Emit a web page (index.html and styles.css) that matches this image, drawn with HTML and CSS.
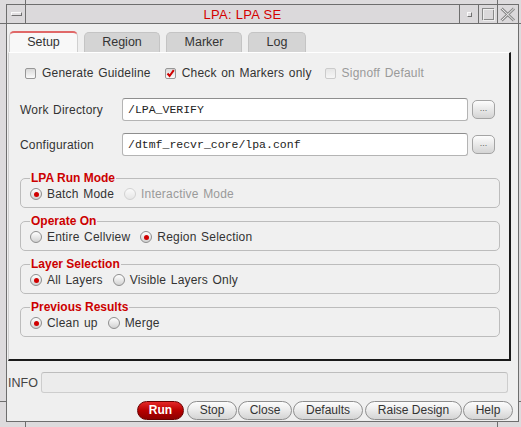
FILE: index.html
```html
<!DOCTYPE html>
<html>
<head>
<meta charset="utf-8">
<link rel="stylesheet" href="styles.css">
</head>
<body>
<div class="screen">
  <span class="deco dh1"></span>
  <span class="deco dh2"></span>
  <span class="deco dh3"></span>
  <span class="deco dh4"></span>
  <span class="deco dv1"></span>
  <span class="deco dv2"></span>
  <span class="deco dv3"></span>
  <span class="deco dv4"></span>
  <div class="window">
    <div class="titlebar">
      <div class="tb-cell"><span class="menu-ico"></span></div>
      <div class="tb-cell tb-title">LPA: LPA SE</div>
      <div class="tb-cell"><span class="min-ico"></span></div>
      <div class="tb-cell">
        <svg width="13" height="13" viewBox="0 0 13 13"><rect x="0.5" y="0.5" width="11" height="11" fill="none" stroke="#8a8a8a"/><rect x="1.5" y="1.5" width="11" height="11" fill="none" stroke="#f4f4f4" stroke-opacity="0.8"/></svg>
      </div>
      <div class="tb-cell last">
        <svg width="16" height="15" viewBox="0 0 16 15"><path d="M1.5 1.5 L14 13.5 M14 1.5 L1.5 13.5" stroke="#8a8a8a" stroke-width="3" fill="none"/><path d="M1.5 1.5 L14 13.5 M14 1.5 L1.5 13.5" stroke="#f2f2f2" stroke-width="1" fill="none"/></svg>
      </div>
    </div>
    <div class="dialog">
      <div class="tabs">
        <div class="tab active">Setup</div>
        <div class="tab">Region</div>
        <div class="tab">Marker</div>
        <div class="tab log">Log</div>
      </div>
      <div class="panel">
        <div class="check-row">
          <div class="check"><span class="cb"></span>Generate Guideline</div>
          <div class="check c2"><span class="cb"><svg width="9" height="9" viewBox="0 0 9 9"><path d="M1.5 4.5 L3.6 7 L7.8 1.2" stroke="#d00000" stroke-width="2" fill="none"/></svg></span>Check on Markers only</div>
          <div class="check c3 disabled"><span class="cb"></span>Signoff Default</div>
        </div>
        <div class="field first">
          <span class="flabel">Work Directory</span>
          <div class="input">/LPA_VERIFY</div>
          <div class="dots">...</div>
        </div>
        <div class="field">
          <span class="flabel">Configuration</span>
          <div class="input">/dtmf_recvr_core/lpa.conf</div>
          <div class="dots">...</div>
        </div>
        <fieldset class="group first">
          <legend>LPA Run Mode</legend>
          <div class="radio-row">
            <div class="ritem"><span class="rb on"></span>Batch Mode</div>
            <div class="ritem disabled"><span class="rb"></span>Interactive Mode</div>
          </div>
        </fieldset>
        <fieldset class="group">
          <legend>Operate On</legend>
          <div class="radio-row">
            <div class="ritem"><span class="rb"></span>Entire Cellview</div>
            <div class="ritem"><span class="rb on"></span>Region Selection</div>
          </div>
        </fieldset>
        <fieldset class="group">
          <legend>Layer Selection</legend>
          <div class="radio-row">
            <div class="ritem"><span class="rb on"></span>All Layers</div>
            <div class="ritem"><span class="rb"></span>Visible Layers Only</div>
          </div>
        </fieldset>
        <fieldset class="group">
          <legend>Previous Results</legend>
          <div class="radio-row">
            <div class="ritem"><span class="rb on"></span>Clean up</div>
            <div class="ritem"><span class="rb"></span>Merge</div>
          </div>
        </fieldset>
      </div>
      <div class="info-row">
        <span class="info-label">INFO</span>
        <div class="info-box"></div>
      </div>
      <div class="buttons">
        <button class="btn run">Run</button>
        <button class="btn stop">Stop</button>
        <button class="btn close">Close</button>
        <button class="btn defaults">Defaults</button>
        <button class="btn raise">Raise Design</button>
        <button class="btn help">Help</button>
      </div>
    </div>
  </div>
</div>
</body>
</html>
```

FILE: styles.css
```css
* { box-sizing: border-box; }
html, body { margin: 0; padding: 0; }
body {
  background: #dddbdd;
  font-family: "Liberation Sans", Arial, sans-serif;
  font-size: 12px;
  color: #333;
}
.screen {
  position: relative;
  width: 521px;
  height: 427px;
  padding: 4px 0 0 6px;
  overflow: hidden;
}
.deco { position: absolute; background: #6e6e6e; }
.dh1 { left: 0; top: 23px; width: 6px; height: 1px; }
.dh2 { left: 519px; top: 23px; width: 3px; height: 1px; }
.dh3 { left: 0; top: 401px; width: 6px; height: 1px; }
.dh4 { left: 519px; top: 401px; width: 3px; height: 1px; }
.dv1 { left: 25px; top: 0; width: 1px; height: 4px; }
.dv2 { left: 497px; top: 0; width: 1px; height: 4px; }
.dv3 { left: 25px; top: 422px; width: 1px; height: 6px; }
.dv4 { left: 497px; top: 422px; width: 1px; height: 6px; }

.window {
  width: 513px;
  height: 418px;
  border: 1px solid #6e6e6e;
  display: flex;
  flex-direction: column;
}
.titlebar {
  flex: none;
  display: grid;
  grid-template-columns: 19px 1fr 19px 19px 20px;
  height: 19px;
  border-bottom: 1px solid #6e6e6e;
  background: #dbd9db;
}
.tb-cell {
  display: flex;
  align-items: center;
  justify-content: center;
  border-right: 1px solid #6e6e6e;
}
.tb-cell.last { border-right: none; }
.tb-title {
  color: #d40000;
  font-size: 13px;
  letter-spacing: 0.3px;
}
.menu-ico {
  width: 11px;
  height: 4px;
  border: 1px solid;
  border-color: #fafafa #707070 #707070 #fafafa;
  background: #e2e0e2;
}
.min-ico {
  width: 5px;
  height: 5px;
  border: 1px solid;
  border-color: #fafafa #707070 #707070 #fafafa;
  background: #e2e0e2;
}

.dialog {
  flex: 1;
  background: #efefef;
  padding: 7px 5px 0 1px;
  display: flex;
  flex-direction: column;
}
.tabs {
  display: flex;
  align-items: flex-end;
  height: 21px;
  margin-left: 1px;
  gap: 6px;
}
.tab {
  width: 76px;
  height: 20px;
  text-align: center;
  line-height: 19px;
  font-size: 12.5px;
  background: #d4d4d4;
  border: 1px solid #c4c4c4;
  border-bottom: none;
  border-radius: 5px 5px 0 0;
}
.tab.active {
  width: 69px;
  height: 21px;
  background: #f8f8f8;
  border-color: #d0d0d0;
  border-top: 2px solid #e06868;
  line-height: 18px;
}
.tab.log { width: 58px; }

.panel {
  width: 503px;
  height: 309px;
  background: #f0f0f0;
  border-style: solid;
  border-width: 1px 2px 2px 1px;
  border-color: #ffffff #1a1a1a #1a1a1a #cfcfcf;
  padding: 13px 9px 0 11px;
}
.check, .flabel, .ritem {
  letter-spacing: 0.2px;
  word-spacing: 1px;
}
.check-row {
  display: flex;
  align-items: center;
  height: 14px;
}
.check {
  display: flex;
  align-items: center;
  margin-left: 5px;
}
.check.c2 { margin-left: 14px; }
.check.c3 { margin-left: 13px; }
.cb {
  width: 11px;
  height: 11px;
  margin-right: 6px;
  border: 1px solid #979797;
  border-radius: 2px;
  background: linear-gradient(#d9d9d9, #fbfbfb);
  display: flex;
  align-items: center;
  justify-content: center;
}
.disabled { color: #9a9a9a; }
.disabled .cb { border-color: #cbcbcb; background: linear-gradient(#e6e6e6, #f6f6f6); }

.field {
  display: flex;
  align-items: center;
  height: 23px;
  margin-right: 5px;
  margin-top: 12px;
}
.field.first { margin-top: 18px; }
.flabel { width: 102px; flex: none; }
.input {
  flex: 1;
  height: 23px;
  border: 1px solid #b4b4b4;
  border-top-color: #8e8e8e;
  border-radius: 3px;
  background: #fff;
  font-family: "Liberation Mono", "Courier New", monospace;
  font-size: 11.5px;
  color: #222;
  padding-left: 5px;
  line-height: 21px;
}
.dots {
  flex: none;
  width: 23px;
  height: 19px;
  margin-left: 4px;
  border: 1px solid #a4a4a4;
  border-radius: 5px;
  background: linear-gradient(#fdfdfd, #d4d4d4);
  color: #666;
  font-size: 9px;
  text-align: center;
  line-height: 15px;
}

.group {
  margin: 6px 0 0 0;
  border: 1px solid #bcbcbc;
  border-radius: 5px;
  padding: 2px 9px 6px 9px;
  min-width: 0;
}
.group.first { margin-top: 15px; }
.group legend {
  padding: 0 1px;
  font-weight: bold;
  font-size: 12px;
  line-height: 14px;
  color: #cc0000;
}
.radio-row {
  display: flex;
  align-items: center;
  height: 14px;
}
.ritem {
  display: flex;
  align-items: center;
  margin-right: 10px;
}
.rb {
  width: 12px;
  height: 12px;
  margin-right: 5px;
  border-radius: 50%;
  border: 1px solid #8e8e8e;
  background: linear-gradient(#ffffff, #d2d2d2);
  display: flex;
  align-items: center;
  justify-content: center;
}
.rb.on::after {
  content: "";
  width: 5px;
  height: 5px;
  border-radius: 50%;
  background: #d00000;
}
.ritem.disabled .rb { border-color: #d2d2d2; background: linear-gradient(#fafafa, #e6e6e6); }

.info-row {
  display: flex;
  align-items: center;
  height: 21px;
  margin-top: 11px;
  margin-right: 5px;
}
.info-label { width: 33px; color: #444; font-size: 12.5px; }
.info-box {
  flex: 1;
  height: 21px;
  border: 1px solid #cdcdcd;
  border-top-color: #bdbdbd;
  border-radius: 3px;
  background: #ececec;
}
.buttons {
  display: flex;
  justify-content: flex-end;
  gap: 1px;
  margin-top: 8px;
  height: 19px;
}
.btn {
  height: 19px;
  margin: 0;
  border: 1px solid #8e8e8e;
  border-radius: 10px;
  background: linear-gradient(#fcfcfc, #ececec 45%, #d4d4d4);
  padding: 0;
  font-family: "Liberation Sans", Arial, sans-serif;
  font-size: 12px;
  line-height: 17px;
  color: #333;
  text-align: center;
}
.btn.run {
  width: 47px;
  margin-right: 2px;
  background: linear-gradient(#e42828, #b80000 50%, #8c0000);
  border-color: #6a0000;
  color: #fff;
  font-weight: bold;
}
.btn.stop { width: 50px; }
.btn.close { width: 54px; }
.btn.defaults { width: 70px; margin-right: 1px; }
.btn.raise { width: 97px; }
.btn.help { width: 50px; }
```
